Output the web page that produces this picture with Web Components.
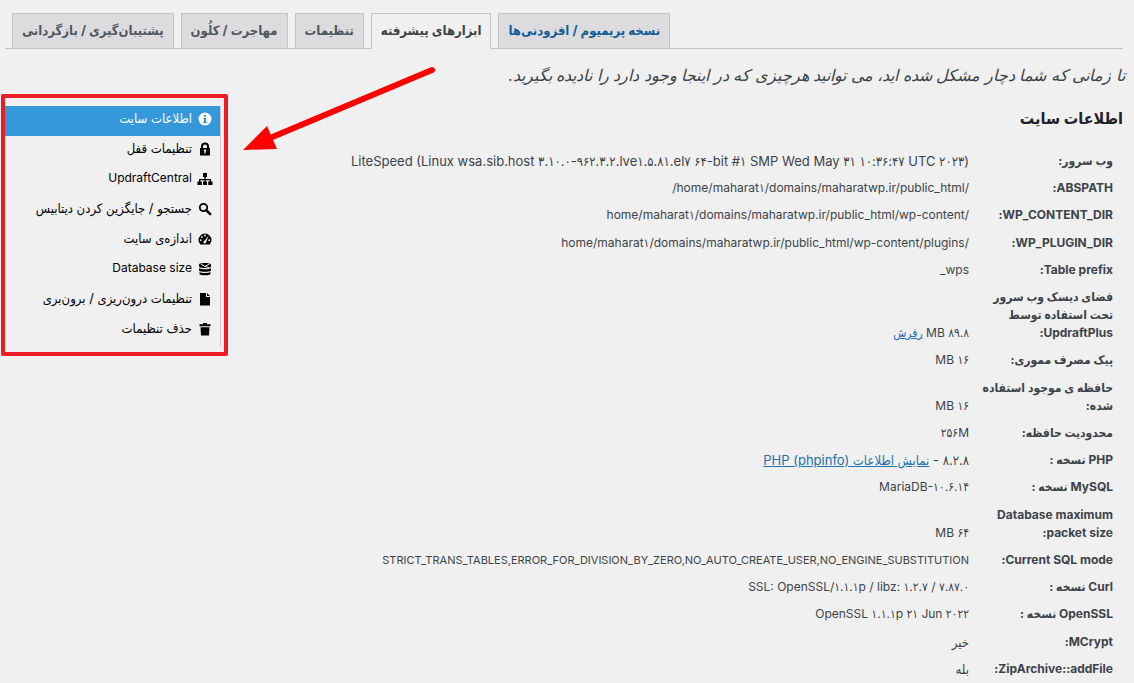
<!DOCTYPE html>
<html lang="fa" dir="rtl">
<head>
<meta charset="utf-8">
<title>ابزارهای پیشرفته</title>
<style>
  body { margin: 0; background: #f0f0f0; color: #3c434a; font: 12px/18px Inter, "DejaVu Sans Condensed", "DejaVu Sans", sans-serif; overflow-x: hidden; }
</style>
</head>
<body>
<tools-page>
  <tab-strip slot="tabs">
    <tab-link>پشتیبان‌گیری / بازگردانی</tab-link>
    <tab-link>مهاجرت / کلُون</tab-link>
    <tab-link>تنظیمات</tab-link>
    <tab-link active>ابزارهای پیشرفته</tab-link>
    <tab-link premium>نسخه پریمیوم / افزودنی‌ها</tab-link>
  </tab-strip>
  <span slot="notice">تا زمانی که شما دچار مشکل شده اید، می توانید هرچیزی که در اینجا وجود دارد را نادیده بگیرید.</span>
  <span slot="heading">اطلاعات سایت</span>
  <site-info slot="info"></site-info>
  <tool-menu slot="menu">
    <menu-item icon="info" active>اطلاعات سایت</menu-item>
    <menu-item icon="lock">تنظیمات قفل</menu-item>
    <menu-item icon="sitemap" latin>UpdraftCentral</menu-item>
    <menu-item icon="search">جستجو / جایگزین کردن دیتابیس</menu-item>
    <menu-item icon="gauge">اندازه‌ی سایت</menu-item>
    <menu-item icon="database" latin>Database size</menu-item>
    <menu-item icon="file">تنظیمات درون‌ریزی / برون‌بری</menu-item>
    <menu-item icon="trash">حذف تنظیمات</menu-item>
  </tool-menu>
  <pointer-arrow slot="arrow"></pointer-arrow>
</tools-page>

<script>
const define = (name, html, setup) => {
  const template = document.createElement('template');
  template.innerHTML = html;
  customElements.define(name, class extends HTMLElement {
    constructor() {
      super();
      this.attachShadow({ mode: 'open' }).append(template.content.cloneNode(true));
    }
    connectedCallback() { if (setup) setup(this, this.shadowRoot); }
  });
};

define('tools-page', `
  <style>
    :host { display: block; position: relative; padding-top: 13px; }
    .notice { margin: 14px 9px 7px; font-size: 16px; line-height: 24px; font-style: italic; }
    .columns { display: flex; align-items: flex-start; }
    main { flex: 1; min-width: 0; }
    h2 { margin: 12px 11px 18px; font-size: 16px; line-height: 24px; font-weight: 700; color: #1d2327; }
    aside { margin-left: 1px; }
  </style>
  <slot name="tabs"></slot>
  <p class="notice"><slot name="notice"></slot></p>
  <div class="columns">
    <main>
      <h2><slot name="heading"></slot></h2>
      <slot name="info"></slot>
    </main>
    <aside><slot name="menu"></slot></aside>
  </div>
  <slot name="arrow"></slot>`);

define('tab-strip', `
  <style>
    :host { display: block; }
    nav { display: flex; direction: ltr; gap: 7px; margin: 0 11px 0 5px; padding-left: 7px; border-bottom: 1px solid #c3c4c7; }
  </style>
  <nav><slot></slot></nav>`);

define('tab-link', `
  <style>
    :host { display: block; margin-bottom: -1px; }
    a { display: block; direction: rtl; padding: 7px 9px 9px; border: 1px solid #c3c4c7; background: #dcdcde; color: #50575e; font-size: 13px; font-weight: 700; text-decoration: none; white-space: nowrap; }
    :host([active]) a { background: #f0f0f0; border-bottom-color: #f0f0f0; color: #3c434a; }
    :host([premium]) a { color: #135e96; }
  </style>
  <a href="#"><slot></slot></a>`);

define('tool-menu', `
  <style>
    :host { display: block; border: 4px solid #ed1c24; border-radius: 2px; }
    nav { width: 215px; margin: 8px 3px 6px 0; border-right: 1px solid #ccc; }
  </style>
  <nav><slot></slot></nav>`);

const icons = {
  info: '<circle cx="8" cy="8" r="6.5" fill="currentColor"/><path d="M7 4h2v1.8H7zM6.2 7H9v4h1v1H6v-1h1V8h-.8z" fill="#3498db"/>',
  lock: '<path d="M3 7h1V5.500a4 4 0 0 1 8 0V7h1v7.500H3zM6 7h4V5.500a2 2 0 0 0-4 0zM7.200 12.500h1.600l-.3-1.700a1.200 1.200 0 1 0-1 0z" fill="currentColor" fill-rule="evenodd"/>',
  sitemap: '<path d="M6 2h4v4H8.700v2H14v2.500h1.500V14h-4.300v-3.500h1.500V9.300H8.700v1.200H10V14H6v-3.500h1.300V9.300h-4v1.200h1.500V14H.5v-3.500H2V8h5.300V6H6z" fill="currentColor"/>',
  search: '<circle cx="6.500" cy="6.500" r="3.700" fill="none" stroke="currentColor" stroke-width="1.800"/><path d="M9.200 9.200l4 4" stroke="currentColor" stroke-width="2.600" stroke-linecap="round"/>',
  gauge: '<path d="M3.300 13.500a6.500 6.500 0 1 1 9.400 0z" fill="currentColor"/><path d="M11.700 4.800L9.200 10.800a1.400 1.400 0 1 1-1.700-1z" fill="#f0f0f0"/><circle cx="8" cy="4.500" r=".9" fill="#f0f0f0"/><circle cx="4.900" cy="6" r=".9" fill="#f0f0f0"/><circle cx="3.800" cy="9.200" r=".9" fill="#f0f0f0"/><circle cx="12.200" cy="9.200" r=".9" fill="#f0f0f0"/>',
  database: '<path d="M2 3.500C2 1.500 14 1.500 14 3.500V5.500C14 7.500 2 7.500 2 5.500zM2 7.200c2 1.500 10 1.500 12 0v2c0 2-12 2-12 0zM2.500 11c2 1.300 9 1.300 11 0v1.800c0 2-11 2-11 0z" fill="currentColor"/><path d="M4 3l4 2.500L13 2.500M8 5.500l4 1" stroke="#f0f0f0" stroke-width="1" fill="none"/>',
  file: '<path d="M3 2h6v4h4v8.500H3zM10 2l3 3h-3z" fill="currentColor"/>',
  trash: '<path d="M6 2h4v1.300h3.500v2h-11v-2H6zM3.500 6.200h9L12 14.500H4z" fill="currentColor"/>'
};

define('menu-item', `
  <style>
    :host { display: block; }
    a { display: flex; align-items: center; gap: 5px; height: 30px; padding: 0 7px 4px; box-sizing: border-box; color: #000; font-size: 13px; text-decoration: none; white-space: nowrap; }
    svg { flex: none; width: 16px; height: 16px; }
    span { padding-bottom: 3px; }
    :host([latin]) a { font-size: 12px; }
    :host([active]) a { background: #3498db; color: #fff; }
  </style>
  <a href="#"><svg viewBox="0 0 16 16" aria-hidden="true"></svg><span><slot></slot></span></a>`,
  (host, root) => { root.querySelector('svg').innerHTML = icons[host.getAttribute('icon')]; });

const rows = [
  ['وب سرور:', 'LiteSpeed (Linux wsa.sib.host ۳.۱۰.۰-۹۶۲.۳.۲.lve۱.۵.۸۱.el۷ ۶۴-bit #۱ SMP Wed May ۳۱ ۱۰:۳۶:۴۷ UTC ۲۰۲۳)', 'wide'],
  ['ABSPATH:', '/home/maharat۱/domains/maharatwp.ir/public_html/'],
  ['WP_CONTENT_DIR:', '/home/maharat۱/domains/maharatwp.ir/public_html/wp-content'],
  ['WP_PLUGIN_DIR:', '/home/maharat۱/domains/maharatwp.ir/public_html/wp-content/plugins'],
  ['Table prefix:', 'wps_'],
  ['فضای دیسک وب سرور تحت استفاده توسط UpdraftPlus:', '۸۹.۸ MB <a href="#">رفرش</a>'],
  ['پیک مصرف مموری:', '۱۶ MB'],
  ['حافظه ی موجود استفاده شده:', '۱۶ MB'],
  ['محدودیت حافظه:', '۲۵۶M'],
  ['PHP نسخه :', '۸.۲.۸ - <a href="#">نمایش اطلاعات PHP (phpinfo)</a>', 'wide'],
  ['MySQL نسخه :', 'MariaDB-۱۰.۶.۱۴'],
  ['Database maximum packet size:', '۶۴ MB'],
  ['Current SQL mode:', 'STRICT_TRANS_TABLES,ERROR_FOR_DIVISION_BY_ZERO,NO_AUTO_CREATE_USER,NO_ENGINE_SUBSTITUTION', 'narrow'],
  ['Curl نسخه :', '۷.۸۷.۰ / SSL: OpenSSL/۱.۱.۱p / libz: ۱.۲.۷'],
  ['OpenSSL نسخه :', 'OpenSSL ۱.۱.۱p ۲۱ Jun ۲۰۲۲'],
  ['MCrypt:', 'خیر', 'wide'],
  ['ZipArchive::addFile:', 'بله', 'wide']
];

define('site-info', `
  <style>
    :host { display: block; padding-right: 21px; }
    table { width: 100%; border-collapse: collapse; }
    th, td { padding: 4px 0 5px; text-align: start; vertical-align: bottom; }
    th { width: 134px; font-weight: 700; }
    td { padding-right: 10px; }
    tr:nth-child(4n) > * { padding-top: 5px; }
    .wide { font-size: 13px; }
    .narrow { font-size: 11px; }
    a { color: #2271b1; }
  </style>
  <table><tbody></tbody></table>`,
  (host, root) => {
    root.querySelector('tbody').innerHTML = rows.map(([label, value, size = '']) =>
      `<tr><th scope="row">${label}</th><td class="${size}">${value}</td></tr>`).join('');
  });

define('pointer-arrow', `
  <style>
    :host { position: absolute; left: 240px; top: 64px; pointer-events: none; }
    svg { display: block; width: 200px; height: 90px; }
  </style>
  <svg viewBox="0 0 200 90" aria-hidden="true">
    <path d="M30 74L192 6" stroke="#f00" stroke-width="6" stroke-linecap="round"/>
    <path d="M3 86L27 62L37 85z" fill="#f00"/>
  </svg>`);
</script>
</body>
</html>
